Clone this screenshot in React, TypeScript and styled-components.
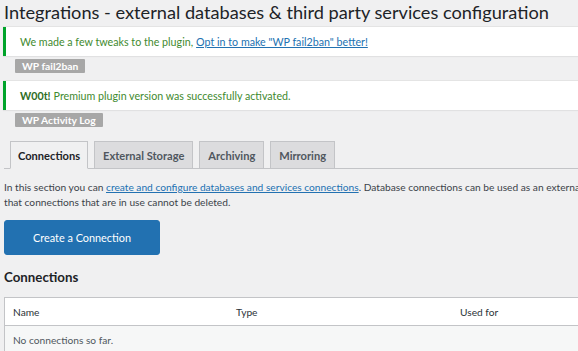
import React from "react";
import styled, { createGlobalStyle } from "styled-components";

const Global = createGlobalStyle`
  html, body { margin: 0; padding: 0; background: #f0f0f1; overflow: hidden; }
  body { font-family: Lato, "Open Sans", sans-serif; color: #3c434a; }
`;

const Page = styled.div`
  width: 980px;
  padding: 0 0 0 4px;
  display: flex;
  flex-direction: column;
`;

const Title = styled.h1`
  margin: 0;
  font-size: 18.2px;
  font-weight: 400;
  line-height: 25px;
  color: #1d2327;
  height: 27px;
`;

const NoticeGroup = styled.div<{ $mb: number }>`
  display: flex;
  flex-direction: column;
  align-items: flex-start;
  margin-left: -1px;
  margin-bottom: ${(p) => p.$mb}px;
`;

const Notice = styled.div`
  align-self: stretch;
  box-sizing: border-box;
  height: 29px;
  background: #fff;
  border-left: 3px solid #00a32a;
  box-shadow: 0 1px 1px rgba(0, 0, 0, 0.06), 0 -1px 0 #e4e4e4;
  display: flex;
  align-items: center;
  padding-left: 14px;
  font-size: 10.7px;
  color: #3f8a2f;
`;

const NoticeLink = styled.a`
  color: #2271b1;
  text-decoration: underline;
  margin-left: 3px;
`;

const Strong = styled.b`
  font-weight: 700;
  color: #2f6d25;
  margin-right: 3px;
`;

const Badge = styled.span`
  margin: 3px 0 0 12px;
  background: #a7a7a7;
  color: #fff;
  font-size: 10.3px;
  font-weight: 700;
  line-height: 14px;
  padding: 0 7px;
  border-radius: 1px;
`;

const TabBar = styled.div`
  display: flex;
  gap: 6px;
  padding-left: 6px;
  border-bottom: 1px solid #c3c4c7;
  height: 27px;
`;

const Tab = styled.div<{ $active?: boolean }>`
  box-sizing: border-box;
  height: ${(p) => (p.$active ? 28 : 27)}px;
  padding: 0 ${(p) => (p.$active ? 7 : 8)}px;
  border: 1px solid #c3c4c7;
  border-bottom: ${(p) => (p.$active ? "1px solid #f0f0f1" : "none")};
  background: ${(p) => (p.$active ? "#f0f0f1" : "#dcdcde")};
  color: ${(p) => (p.$active ? "#1d2327" : "#50575e")};
  font-size: 11.1px;
  font-weight: 700;
  display: flex;
  align-items: center;
`;

const Desc = styled.p`
  margin: 11px 0 0 0;
  font-size: 10.2px;
  line-height: 15px;
  color: #3c434a;
`;

const DescLink = styled.a`
  color: #2271b1;
  text-decoration: underline;
`;

const PrimaryButton = styled.button`
  margin-top: 10px;
  width: 156px;
  height: 35px;
  background: #2271b1;
  border: 1px solid #2271b1;
  border-radius: 3px;
  color: #fff;
  font-family: inherit;
  font-size: 10.9px;
  padding: 0;
  align-self: flex-start;
`;

const SectionTitle = styled.h2`
  margin: 13px 0 0 0;
  font-size: 13.3px;
  font-weight: 700;
  line-height: 18px;
  color: #1d2327;
`;

const Table = styled.div`
  margin-top: 11px;
  border: 1px solid #c3c4c7;
  border-right: none;
  display: flex;
  flex-direction: column;
`;

const Row = styled.div<{ $head?: boolean }>`
  display: grid;
  grid-template-columns: 223px 224px 1fr;
  height: ${(p) => (p.$head ? 27 : 28)}px;
  align-items: center;
  padding-left: 8px;
  background: ${(p) => (p.$head ? "#fff" : "#f6f7f7")};
  border-bottom: ${(p) => (p.$head ? "1px solid #c3c4c7" : "none")};
  font-size: 10.2px;
  color: ${(p) => (p.$head ? "#2c3338" : "#50575e")};
`;

export default function App() {
  return (
    <>
      <Global />
      <Page>
        <Title>Integrations - external databases &amp; third party services configuration</Title>
        <NoticeGroup $mb={8}>
          <Notice>
            We made a few tweaks to the plugin,
            <NoticeLink href="#">Opt in to make "WP fail2ban" better!</NoticeLink>
          </Notice>
          <Badge>WP fail2ban</Badge>
        </NoticeGroup>
        <NoticeGroup $mb={14}>
          <Notice>
            <Strong>W00t!</Strong> Premium plugin version was successfully activated.
          </Notice>
          <Badge>WP Activity Log</Badge>
        </NoticeGroup>
        <TabBar>
          <Tab $active>Connections</Tab>
          <Tab>External Storage</Tab>
          <Tab>Archiving</Tab>
          <Tab>Mirroring</Tab>
        </TabBar>
        <Desc>
          In this section you can <DescLink href="#">create and configure databases and services connections</DescLink>. Database connections can be used as an external database for activity log storage. Please note
          <br />
          that connections that are in use cannot be deleted.
        </Desc>
        <PrimaryButton>Create a Connection</PrimaryButton>
        <SectionTitle>Connections</SectionTitle>
        <Table>
          <Row $head>
            <span>Name</span>
            <span>Type</span>
            <span>Used for</span>
          </Row>
          <Row>
            <span>No connections so far.</span>
          </Row>
        </Table>
      </Page>
    </>
  );
}
